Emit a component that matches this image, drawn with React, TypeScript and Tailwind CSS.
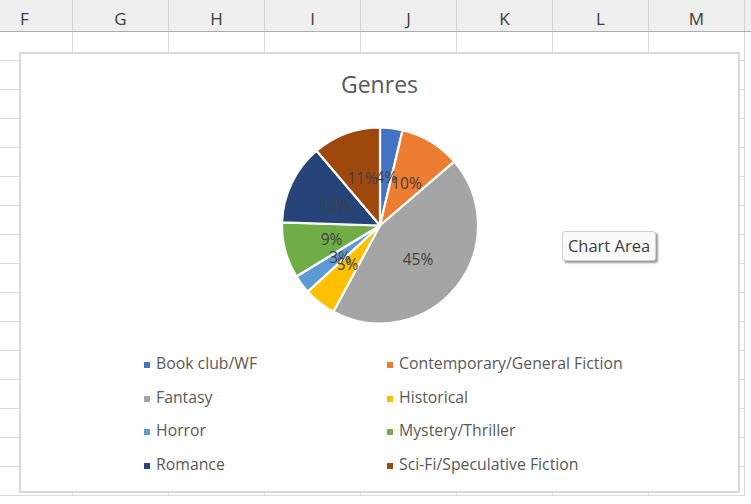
import React from "react";

type Slice = { name: string; color: string; v: number };

const slices: Slice[] = [
  { name: "Book club/WF", color: "#4472C4", v: 3.7 },
  { name: "Contemporary/General Fiction", color: "#ED7D31", v: 10.0 },
  { name: "Fantasy", color: "#A5A5A5", v: 44.2 },
  { name: "Historical", color: "#FFC000", v: 5.3 },
  { name: "Horror", color: "#5B9BD5", v: 3.1 },
  { name: "Mystery/Thriller", color: "#70AD47", v: 9.2 },
  { name: "Romance", color: "#264478", v: 13.3 },
  { name: "Sci-Fi/Speculative Fiction", color: "#9E480E", v: 11.2 },
];

const labels = [
  { t: "4%", x: 106.5, y: 57 },
  { t: "10%", x: 126.5, y: 63 },
  { t: "45%", x: 138, y: 138.5 },
  { t: "5%", x: 67.5, y: 144 },
  { t: "3%", x: 60, y: 136.5 },
  { t: "9%", x: 51.5, y: 119 },
  { t: "13%", x: 55.5, y: 84.5 },
  { t: "11%", x: 82.5, y: 58 },
];

const columns = ["F", "G", "H", "I", "J", "K", "L", "M"];

function Pie() {
  const cx = 100;
  const cy = 99.5;
  const r = 98;
  let acc = 0;
  const pt = (f: number) => {
    const a = 2 * Math.PI * f - Math.PI / 2;
    return [cx + r * Math.cos(a), cy + r * Math.sin(a)];
  };
  return (
    <svg width="200" height="200" viewBox="0 0 200 200" className="overflow-visible">
      {slices.map((s) => {
        const f0 = acc / 100;
        acc += s.v;
        const f1 = acc / 100;
        const [x0, y0] = pt(f0);
        const [x1, y1] = pt(f1);
        const large = f1 - f0 > 0.5 ? 1 : 0;
        const d = `M${cx},${cy} L${x0},${y0} A${r},${r} 0 ${large} 1 ${x1},${y1} Z`;
        return (
          <path key={s.name} d={d} fill={s.color} stroke="#ffffff" strokeWidth="2.2" strokeLinejoin="round" />
        );
      })}
      {labels.map((l) => (
        <text key={l.t} x={l.x} y={l.y} textAnchor="middle" fontSize="15.5" fill="#404040">
          {l.t}
        </text>
      ))}
    </svg>
  );
}

export default function App() {
  return (
    <div className="relative w-[751px] h-[504px] overflow-hidden bg-white font-['Open_Sans',sans-serif]">
      {/* column header */}
      <div className="flex h-[32px] bg-[#efefef] border-b border-[#ababab]">
        {columns.map((c, i) => (
          <div
            key={c}
            className={`flex shrink-0 w-[96px] h-full items-center justify-center pt-[7px] border-r border-[#d4d4d4] text-[17px] text-[#3b3b3b] ${
              i === 0 ? "ml-[-23px]" : ""
            }`}
          >
            {c}
          </div>
        ))}
      </div>
      {/* sheet rows */}
      {Array.from({ length: 16 }).map((_, r) => (
        <div key={r} className="flex h-[29px]">
          {columns.map((c, i) => (
            <div
              key={c}
              className={`shrink-0 w-[96px] h-full border-r border-b border-[#dadada] ${i === 0 ? "ml-[-23px]" : ""}`}
            />
          ))}
        </div>
      ))}

      {/* chart object floating over the sheet */}
      <div className="absolute left-[19px] top-[52px] w-[721px] h-[441px] border-2 border-[#d9d9d9] bg-white flex flex-col">
        <div className="pt-[15px] text-center text-[23px] leading-[30px] text-[#595959]">Genres</div>
        <div className="mt-[27px] flex justify-center">
          <Pie />
        </div>
        <div className="mt-[20px] ml-[123px] grid grid-cols-[243px_auto] text-[15.8px] text-[#595959]">
          {slices.map((s) => (
            <div key={s.name} className="flex items-center h-[33.7px] gap-[6px]">
              <span className="w-[6px] h-[6px] mt-[4px] shrink-0" style={{ backgroundColor: s.color }} />
              <span className="leading-[20px] whitespace-nowrap">{s.name}</span>
            </div>
          ))}
        </div>

        <div className="absolute left-[541px] top-[177px] w-[94px] h-[30px] flex items-center justify-center rounded-[3px] border border-[#d0d0d0] bg-[#fafafa] shadow-[2px_2px_2px_rgba(0,0,0,0.4)] text-[16.5px] text-[#404040]">
          Chart Area
        </div>
      </div>
    </div>
  );
}
